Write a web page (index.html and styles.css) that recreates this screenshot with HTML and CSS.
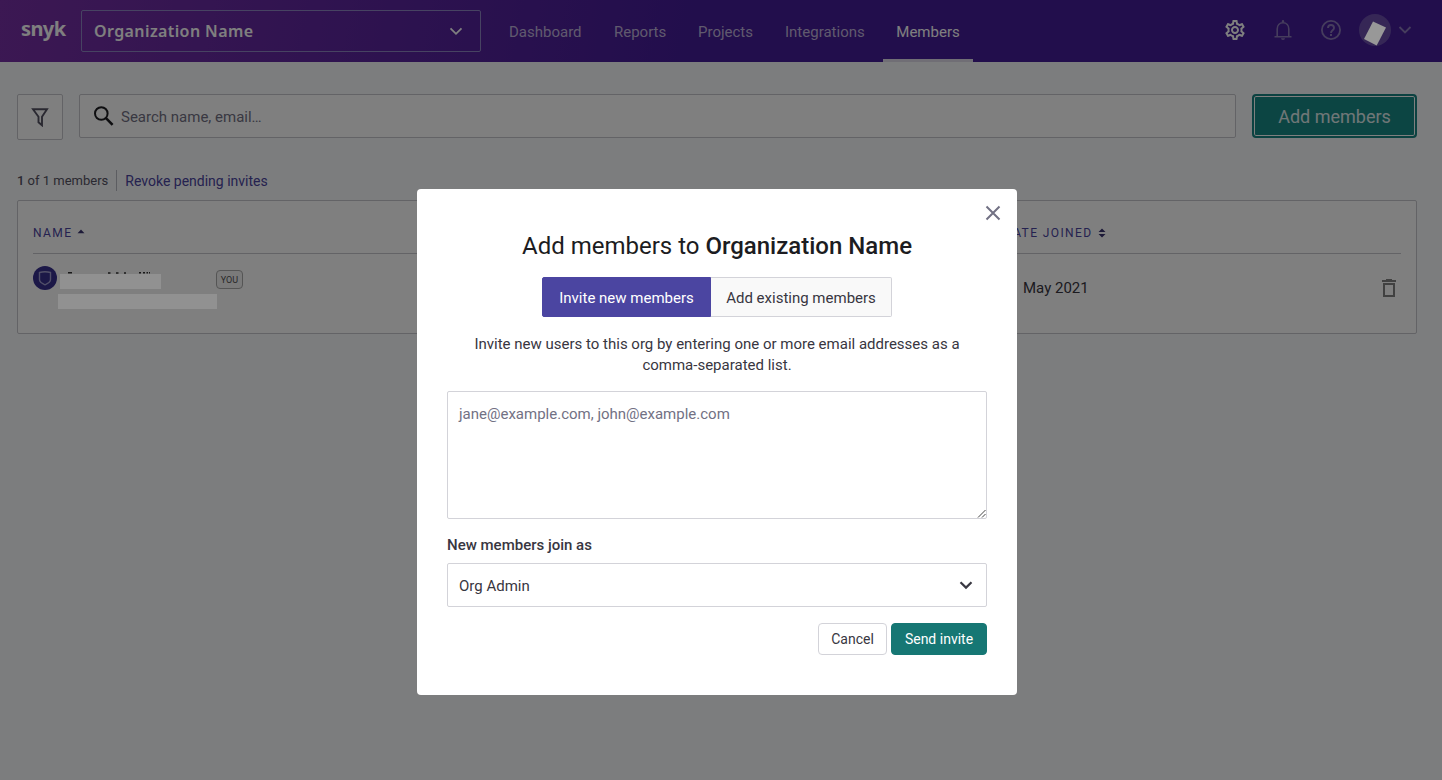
FILE: index.html
```html
<!DOCTYPE html>
<html lang="en">
<head>
<meta charset="utf-8">
<title>Members | Snyk</title>
<link rel="stylesheet" href="styles.css">
</head>
<body>
<header class="header">
  <span class="logo">snyk</span>
  <div class="org-select">
    <span>Organization Name</span>
    <svg width="14" height="10" viewBox="0 0 14 10"><path d="M1.5 2.300 7 7.800l5.500-5.500" fill="none" stroke="#fff" stroke-width="1.800"/></svg>
  </div>
  <nav class="nav">
    <a class="nav-item dashboard">Dashboard</a>
    <a class="nav-item reports">Reports</a>
    <a class="nav-item projects">Projects</a>
    <a class="nav-item integrations">Integrations</a>
    <a class="nav-item members active">Members</a>
  </nav>
  <div class="tools">
    <svg class="gear" width="24" height="24" viewBox="0 0 24 24"><path fill="#fff" d="M19.43 12.98c.04-.32.07-.64.07-.98s-.03-.66-.07-.98l2.11-1.65c.19-.15.24-.42.12-.64l-2-3.46c-.09-.16-.26-.25-.44-.25-.06 0-.12.01-.17.03l-2.49 1c-.52-.4-1.08-.73-1.69-.98l-.38-2.65C14.46 2.18 14.25 2 14 2h-4c-.25 0-.46.18-.49.42l-.38 2.65c-.61.25-1.17.59-1.69.98l-2.49-1c-.06-.02-.12-.03-.18-.03-.17 0-.34.09-.43.25l-2 3.46c-.13.22-.07.49.12.64l2.11 1.65c-.04.32-.07.65-.07.98s.03.66.07.98l-2.11 1.65c-.19.15-.24.42-.12.64l2 3.46c.09.16.26.25.44.25.06 0 .12-.01.17-.03l2.49-1c.52.4 1.08.73 1.69.98l.38 2.65c.03.24.24.42.49.42h4c.25 0 .46-.18.49-.42l.38-2.65c.61-.25 1.17-.59 1.69-.98l2.49 1c.06.02.12.03.18.03.17 0 .34-.09.43-.25l2-3.46c.12-.22.07-.49-.12-.64l-2.11-1.65zm-1.98-1.71c.04.31.05.52.05.73s-.02.43-.05.73l-.14 1.13.89.7 1.08.84-.7 1.21-1.27-.51-1.04-.42-.9.68c-.43.32-.84.56-1.25.73l-1.06.43-.16 1.13-.2 1.35h-1.4l-.19-1.35-.16-1.13-1.06-.43c-.43-.18-.83-.41-1.23-.71l-.91-.7-1.06.43-1.27.51-.7-1.21 1.08-.84.89-.7-.14-1.13c-.03-.31-.05-.54-.05-.74s.02-.43.05-.73l.14-1.13-.89-.7-1.08-.84.7-1.21 1.27.51 1.04.42.9-.68c.43-.32.84-.56 1.25-.73l1.06-.43.16-1.13.2-1.35h1.39l.19 1.35.16 1.13 1.06.43c.43.18.83.41 1.23.71l.91.7 1.06-.43 1.27-.51.7 1.21-1.07.85-.89.7.14 1.13zM12 8c-2.21 0-4 1.79-4 4s1.79 4 4 4 4-1.79 4-4-1.79-4-4-4zm0 6c-1.1 0-2-.9-2-2s.9-2 2-2 2 .9 2 2-.9 2-2 2z"/></svg>
    <svg class="bell" width="24" height="24" viewBox="0 0 24 24"><path fill="none" stroke="#8c7bba" stroke-width="1.600" d="M3.500 18.700h17M6.200 18.500V11c0-3.600 2.400-6.300 5.800-6.300s5.800 2.700 5.800 6.300v7.500"/><path fill="#8c7bba" d="M10.800 4.600V3.200a1.200 1.200 0 0 1 2.400 0v1.400zM10 20.300h4a2 1.800 0 0 1-4 0z"/></svg>
    <svg class="help" width="24" height="24" viewBox="0 0 24 24"><path fill="#8c7bba" d="M11 16h2v2h-2z"/><circle cx="12" cy="12" r="9.100" fill="none" stroke="#8c7bba" stroke-width="1.800"/><path d="M9 10a3 3 0 0 1 6 0c0 2.200-3 2.400-3 5" fill="none" stroke="#8c7bba" stroke-width="1.900"/></svg>
    <span class="user"><svg class="mask" width="32" height="32" viewBox="0 0 32 32"><path fill="#989898" d="m14 7.500 13 6L17.700 31.500 5 25z"/></svg></span>
    <svg class="user-arrow" width="14" height="10" viewBox="0 0 14 10"><path d="M1.500 2 7 7.500 12.500 2" fill="none" stroke="#8c7bba" stroke-width="1.800"/></svg>
  </div>
</header>
<main class="page">
  <div class="toolbar">
    <div class="filter"><svg width="20" height="20" viewBox="0 0 20 20"><path d="M3 2.300h14L12 9.800v8.500l-3.500-3V9.800z" fill="none" stroke="#555363" stroke-width="1.900"/></svg></div>
    <div class="search">
      <svg width="22" height="22" viewBox="0 0 22 22"><circle cx="8.300" cy="8.500" r="6.300" fill="none" stroke="#1c1c21" stroke-width="2"/><path d="m13 13.200 6.600 6.600" stroke="#1c1c21" stroke-width="2.600"/></svg>
      <span>Search name, email…</span>
    </div>
    <div class="add">Add members</div>
  </div>
  <div class="summary"><span class="count"><b>1</b> of 1 members</span><span class="revoke">Revoke pending invites</span></div>
  <section class="card">
    <div class="row head">
      <span class="col-name">NAME <svg width="8" height="5" viewBox="0 0 8 5"><path d="M.5 4.200 4 .5l3.500 3.700z" fill="#3b3470"/></svg></span>
      <span class="col-date">DATE JOINED <svg width="8" height="10" viewBox="0 0 8 10"><path d="M.5 4 4 .5 7.500 4zM.5 6 4 9.500 7.500 6z" fill="#3b3470"/></svg></span>
    </div>
    <div class="row member">
      <svg class="shield" width="24" height="24" viewBox="0 0 24 24"><circle cx="12" cy="12" r="12" fill="#38308f"/><path d="M6.500 6.500c3.500-1 7.500-1 11 0v7c0 2-2.500 4-5.500 5.300-3-1.300-5.500-3.300-5.500-5.300z" fill="none" stroke="#a39fd0" stroke-width="1.400"/></svg>
      <div class="identity">
        <svg class="name-edge" width="159" height="2" viewBox="0 0 159 2"><path d="M10 .8h4M50 1h2.500M58 1h2.500M66 1h2M81 .8h2M85 .8h2M88.500 .8h1.500M91 .8h1" stroke="#333" stroke-width="1.400"/></svg>
        <span class="redacted first"></span>
        <span class="redacted second"></span>
      </div>
      <span class="you">YOU</span>
      <span class="joined">May 2021</span>
      <svg class="trash" width="16" height="20" viewBox="0 0 16 20"><path fill="#828282" fill-rule="evenodd" d="M5 1h6v1h4v2H1V2h4zM2 5h12v14H2zm2 2v10h8V7z"/></svg>
    </div>
  </section>
</main>
<div class="overlay">
  <div class="modal">
    <div class="close"><svg width="16" height="16" viewBox="0 0 16 16"><path d="m1.500 1.500 13 13m0-13-13 13" stroke="#727184" stroke-width="2" fill="none"/></svg></div>
    <h1 class="title">Add members to <b>Organization Name</b></h1>
    <div class="tabs"><span class="tab selected">Invite new members</span><span class="tab">Add existing members</span></div>
    <p class="intro">Invite new users to this org by entering one or more email addresses as a comma-separated list.</p>
    <div class="emails">jane@example.com, john@example.com
      <svg class="grip" width="9" height="9" viewBox="0 0 9 9"><path d="m1 8.500 7.500-7.500M5 8.500 8.500 5" stroke="#444" stroke-width="1" fill="none"/></svg>
    </div>
    <div class="label">New members join as</div>
    <div class="role"><span>Org Admin</span><svg width="14" height="10" viewBox="0 0 14 10"><path d="m1.500 2.300 5.500 5.300 5.500-5.300" fill="none" stroke="#393842" stroke-width="2.200"/></svg></div>
    <div class="actions"><span class="button cancel">Cancel</span><span class="button send">Send invite</span></div>
  </div>
</div>
</body>
</html>
```
FILE: styles.css
```css
* { box-sizing: border-box; }
body { margin: 0; height: 780px; overflow: hidden; background: #f9fafc; font-family: Roboto, "Liberation Sans", sans-serif; font-size: 15px; color: #383641; }
svg { display: block; flex: none; }
.header { display: flex; height: 62px; padding-left: 21px; background: linear-gradient(100deg, #7830a6 0, #441c99 690px); }
.logo { width: 60px; padding-top: 14px; font: 700 20px/30px "Noto Sans", sans-serif; letter-spacing: -.6px; color: #fff; }
.org-select { display: flex; align-items: center; justify-content: space-between; width: 400px; height: 42px; margin-top: 10px; padding: 0 17px 0 12px; border: 1px solid #8e86c4; border-radius: 2px; color: #fff; font: 600 16px "Noto Sans", sans-serif; letter-spacing: .4px; }
.nav { display: flex; margin-left: 28px; }
.nav-item { padding-top: 23px; line-height: 18px; color: #c0b4dc; white-space: nowrap; }
.dashboard { width: 105px; }
.reports { width: 84px; }
.projects { width: 87px; }
.integrations { width: 98px; }
.members { width: 90px; text-align: center; border-bottom: 3px solid #e0dcea; border-radius: 2px 2px 0 0; color: #fff; }
.tools { display: flex; margin: 14px 30px 0 auto; align-items: center; height: 32px; }
.bell { margin-left: 24px; }
.help { margin-left: 24px; }
.user { width: 32px; height: 32px; margin-left: 16px; border-radius: 50%; background: #6c4fad; }
.mask { position: relative; z-index: 2; }
.user-arrow { margin-left: 7px; }
.page { padding: 32px 25px 0 17px; }
.toolbar { display: flex; gap: 16px; height: 46px; }
.filter { display: flex; align-items: center; justify-content: center; width: 46px; height: 46px; background: #fff; border: 1px solid #c6c7cc; border-radius: 2px; }
.search { display: flex; align-items: center; gap: 6px; flex: 1; height: 44px; padding-left: 13px; background: #fff; border: 1px solid #c6c7cc; border-radius: 2px; color: #727184; }
.search span { padding-top: 2px; }
.add { width: 165px; height: 44px; border: 2px solid #188582; border-radius: 4px; background: #188a87; box-shadow: inset 0 0 0 1px #fff; color: #e0efef; font-size: 18px; line-height: 41px; text-align: center; }
.summary { display: flex; align-items: center; height: 22px; margin-top: 29px; }
.count { padding-right: 8px; border-right: 1px solid #b9bac2; line-height: 21px; font-size: 13px; color: #555363; }
.count b { font-weight: 500; }
.revoke { padding-left: 8px; padding-top: 1px; font-size: 14px; color: #4b45a1; }
.card { height: 134px; margin-top: 9px; padding: 0 15px; border: 1px solid #c6c7cc; border-radius: 2px; background: #fff; }
.row { display: flex; }
.head { height: 53px; padding-top: 25px; border-bottom: 1px solid #c6c7cc; font-size: 12px; line-height: 14px; letter-spacing: 1.4px; color: #4b45a1; }
.head span { display: flex; align-items: center; gap: 5px; height: 14px; }
.col-name { width: 971px; }
.col-name svg { margin-bottom: 3px; }
.member { height: 80px; padding-top: 12px; }
.identity { width: 159px; margin-left: 1px; padding-top: 6px; }
.redacted { position: relative; z-index: 2; display: block; height: 15px; background: #919191; }
.first { width: 101px; margin-left: 2px; }
.second { width: 159px; margin-top: 5px; }
.you { height: 19px; width: 27px; margin: 4px 0 0 -1px; border: 1px solid #aaa; border-radius: 4px; background: #f4f4f4; font-size: 9px; line-height: 18px; text-align: center; color: #555; }
.joined { margin: 13px 0 0 780px; line-height: 18px; }
.trash { margin: 12px 4px 0 auto; }
.overlay { position: fixed; inset: 0; z-index: 1; background: rgba(0, 0, 0, .5); }
.modal { position: relative; z-index: 3; width: 600px; height: 506px; margin: 189px 0 0 417px; padding: 16px 30px 0; border-radius: 4px; background: #fff; }
.close { display: flex; justify-content: flex-end; margin-right: -14px; height: 16px; }
.title { margin: 11px 0 0; text-align: center; font-size: 24px; line-height: 28px; font-weight: 400; color: #1c1c21; }
.title b { font-weight: 500; }
.tabs { display: flex; width: 350px; height: 40px; margin: 17px auto 0; }
.tab { flex: 1; border: 1px solid #d3d3d9; border-left: 0; border-radius: 0 2px 2px 0; background: #f9f9f9; line-height: 40px; text-align: center; }
.selected { flex: none; width: 169px; border: 1px solid #4b45a1; border-radius: 2px 0 0 2px; background: #4b45a1; color: #fff; }
.intro { width: 500px; margin: 17px auto 0; line-height: 21px; text-align: center; }
.emails { position: relative; height: 128px; margin-top: 15px; padding: 12px 11px; border: 1px solid #d3d3d9; border-radius: 2px; line-height: 21px; color: #727184; }
.grip { position: absolute; right: 0; bottom: 0; }
.label { margin-top: 15px; line-height: 22px; font-weight: 500; }
.role { display: flex; align-items: center; justify-content: space-between; height: 44px; margin-top: 7px; padding: 0 13px 0 11px; border: 1px solid #d3d3d9; border-radius: 2px; }
.role span { padding-top: 2px; }
.actions { display: flex; justify-content: flex-end; gap: 4px; margin-top: 16px; }
.button { height: 32px; border: 1px solid #d3d3d9; border-radius: 4px; font-size: 14px; line-height: 31px; text-align: center; }
.cancel { width: 69px; }
.send { width: 96px; border-color: #167774; background: #167774; color: #fff; }
```
